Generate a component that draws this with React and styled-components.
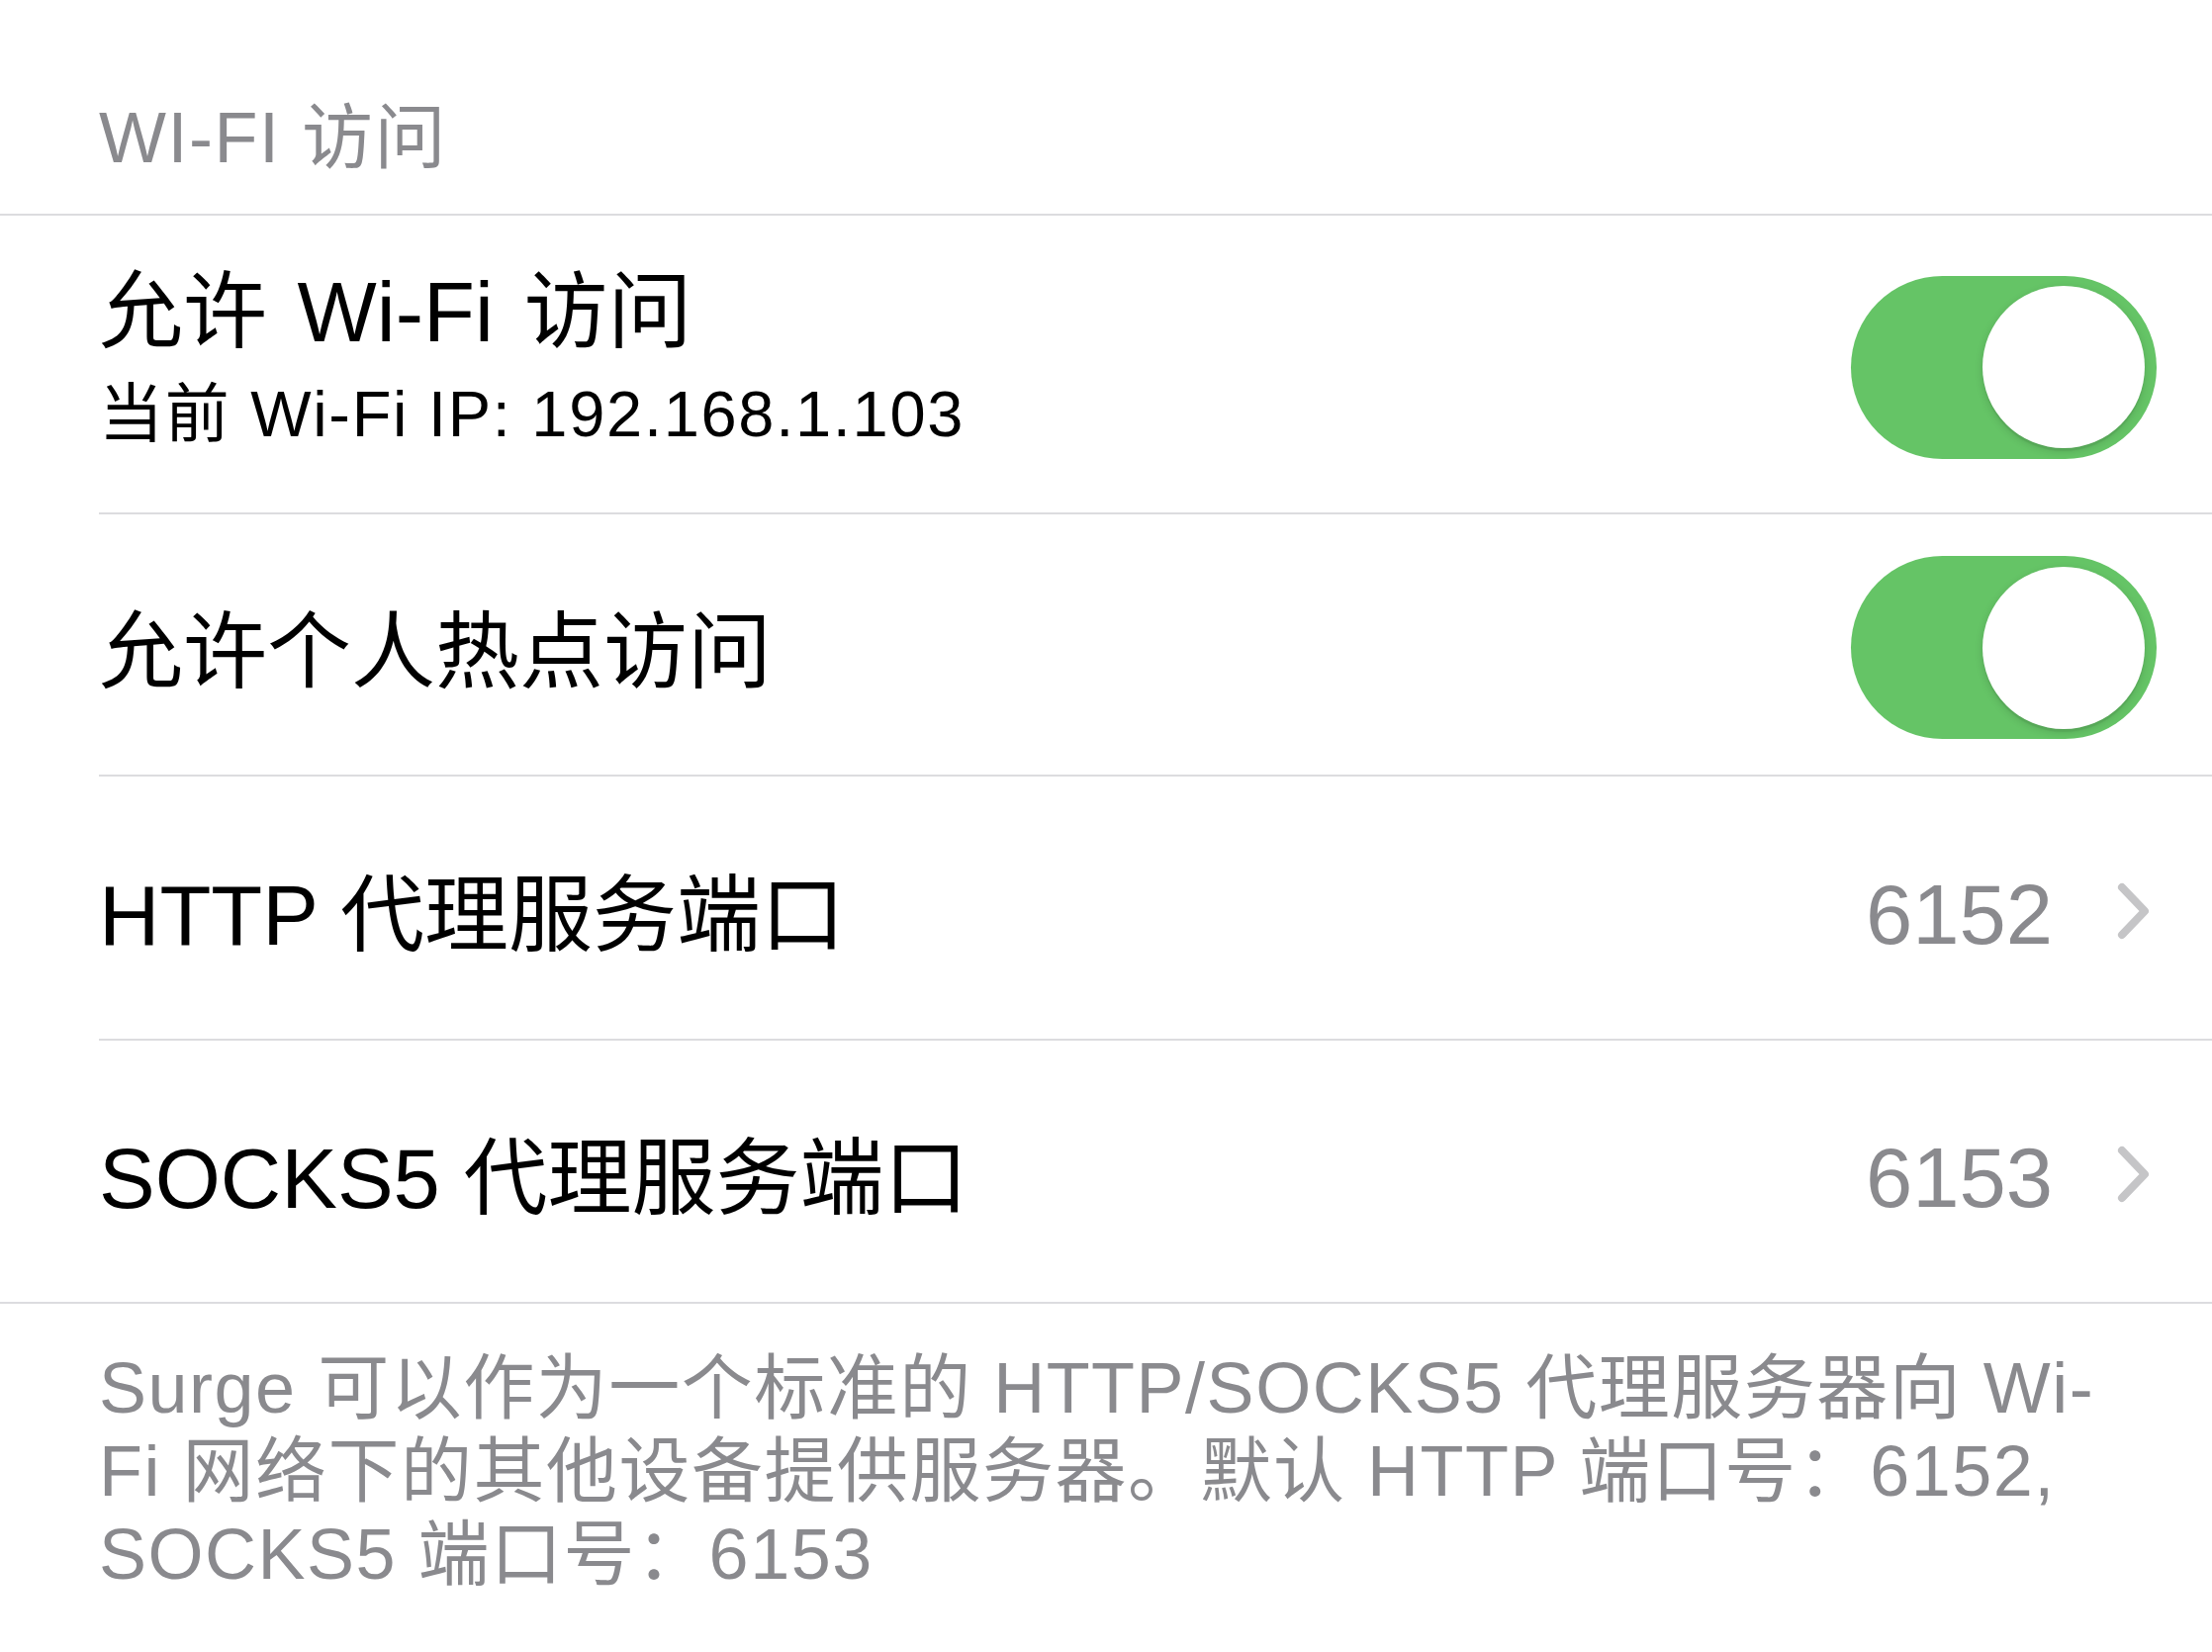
import React from 'react';
import styled, { createGlobalStyle } from 'styled-components';

const GlobalStyle = createGlobalStyle`
  html, body {
    margin: 0;
    padding: 0;
    background: #ffffff;
  }
  body {
    font-family: "Liberation Sans", "Noto Sans CJK SC", sans-serif;
  }
`;

const Page = styled.div`
  width: 2236px;
  min-height: 1670px;
  background: #ffffff;
  font-family: "Liberation Sans", "Noto Sans CJK SC", sans-serif;
`;

const SectionHeader = styled.div`
  box-sizing: border-box;
  height: 216px;
  padding: 103px 100px 0;
  font-size: 72px;
  line-height: 72px;
  letter-spacing: 1.5px;
  color: #8a8a8e;
  white-space: nowrap;
`;

const Group = styled.div`
  border-top: 2px solid #dcdcdf;
  border-bottom: 2px solid #dcdcdf;
`;

const Separator = styled.div`
  height: 2px;
  margin-left: 100px;
  background: #dcdcdf;
`;

const Row = styled.div`
  box-sizing: border-box;
  display: flex;
  align-items: center;
  height: ${(p) => p.$h}px;
  padding: 6px ${(p) => p.$pr}px 0 100px;
`;

const TextBlock = styled.div`
  flex: 1;
  display: flex;
  flex-direction: column;
  margin-bottom: 10px;
`;

const Title = styled.div`
  flex: 1;
  font-size: 85px;
  line-height: 100px;
  margin-top: ${(p) => (p.$block ? 0 : 10)}px;
  word-spacing: ${(p) => (p.$block ? 7 : 0)}px;
  color: #000000;
  white-space: nowrap;
`;

const Subtitle = styled.div`
  font-size: 65px;
  line-height: 94px;
  margin-top: 6px;
  letter-spacing: 1.7px;
  color: #000000;
  white-space: nowrap;
`;

const Value = styled.div`
  font-size: 85px;
  line-height: 100px;
  margin-top: 8px;
  color: #8a8a8e;
  white-space: nowrap;
`;

const ChevronWrap = styled.svg`
  display: block;
  flex-shrink: 0;
  margin-left: 65px;
`;

const Switch = styled.div`
  box-sizing: border-box;
  flex-shrink: 0;
  width: 309px;
  height: 185px;
  border-radius: 93px;
  background: #65c466;
  display: flex;
  align-items: center;
  justify-content: ${(p) => (p.$on ? 'flex-end' : 'flex-start')};
  padding: 0 12px;
`;

const Knob = styled.div`
  width: 164px;
  height: 164px;
  border-radius: 50%;
  background: #ffffff;
  box-shadow: 0 3px 8px rgba(0, 0, 0, 0.15), 0 3px 1px rgba(0, 0, 0, 0.06);
`;

const Footer = styled.div`
  padding: 43px 40px 0 100px;
  font-size: 72px;
  line-height: 84px;
  letter-spacing: 1.5px;
  color: #8a8a8e;
  white-space: nowrap;
`;

function Chevron() {
  return (
    <ChevronWrap width="33" height="58" viewBox="0 0 33 58">
      <polyline
        points="5,5 28,29 5,53"
        fill="none"
        stroke="#c5c5c7"
        strokeWidth="8"
        strokeLinecap="round"
        strokeLinejoin="round"
      />
    </ChevronWrap>
  );
}

function Toggle({ on = true }) {
  return (
    <Switch $on={on}>
      <Knob />
    </Switch>
  );
}

export default function App() {
  return (
    <Page>
      <GlobalStyle />
      <SectionHeader>WI-FI 访问</SectionHeader>
      <Group>
        <Row $h={300} $pr={56}>
          <TextBlock>
            <Title $block>允许 Wi-Fi 访问</Title>
            <Subtitle>当前 Wi-Fi IP: 192.168.1.103</Subtitle>
          </TextBlock>
          <Toggle on />
        </Row>
        <Separator />
        <Row $h={263} $pr={56}>
          <Title>允许个人热点访问</Title>
          <Toggle on />
        </Row>
        <Separator />
        <Row $h={265} $pr={63}>
          <Title>HTTP 代理服务端口</Title>
          <Value>6152</Value>
          <Chevron />
        </Row>
        <Separator />
        <Row $h={264} $pr={63}>
          <Title>SOCKS5 代理服务端口</Title>
          <Value>6153</Value>
          <Chevron />
        </Row>
      </Group>
      <Footer>
        Surge 可以作为一个标准的 HTTP/SOCKS5 代理服务器向 Wi-
        <br />
        Fi 网络下的其他设备提供服务器。默认 HTTP 端口号：6152,
        <br />
        SOCKS5 端口号：6153
      </Footer>
    </Page>
  );
}
